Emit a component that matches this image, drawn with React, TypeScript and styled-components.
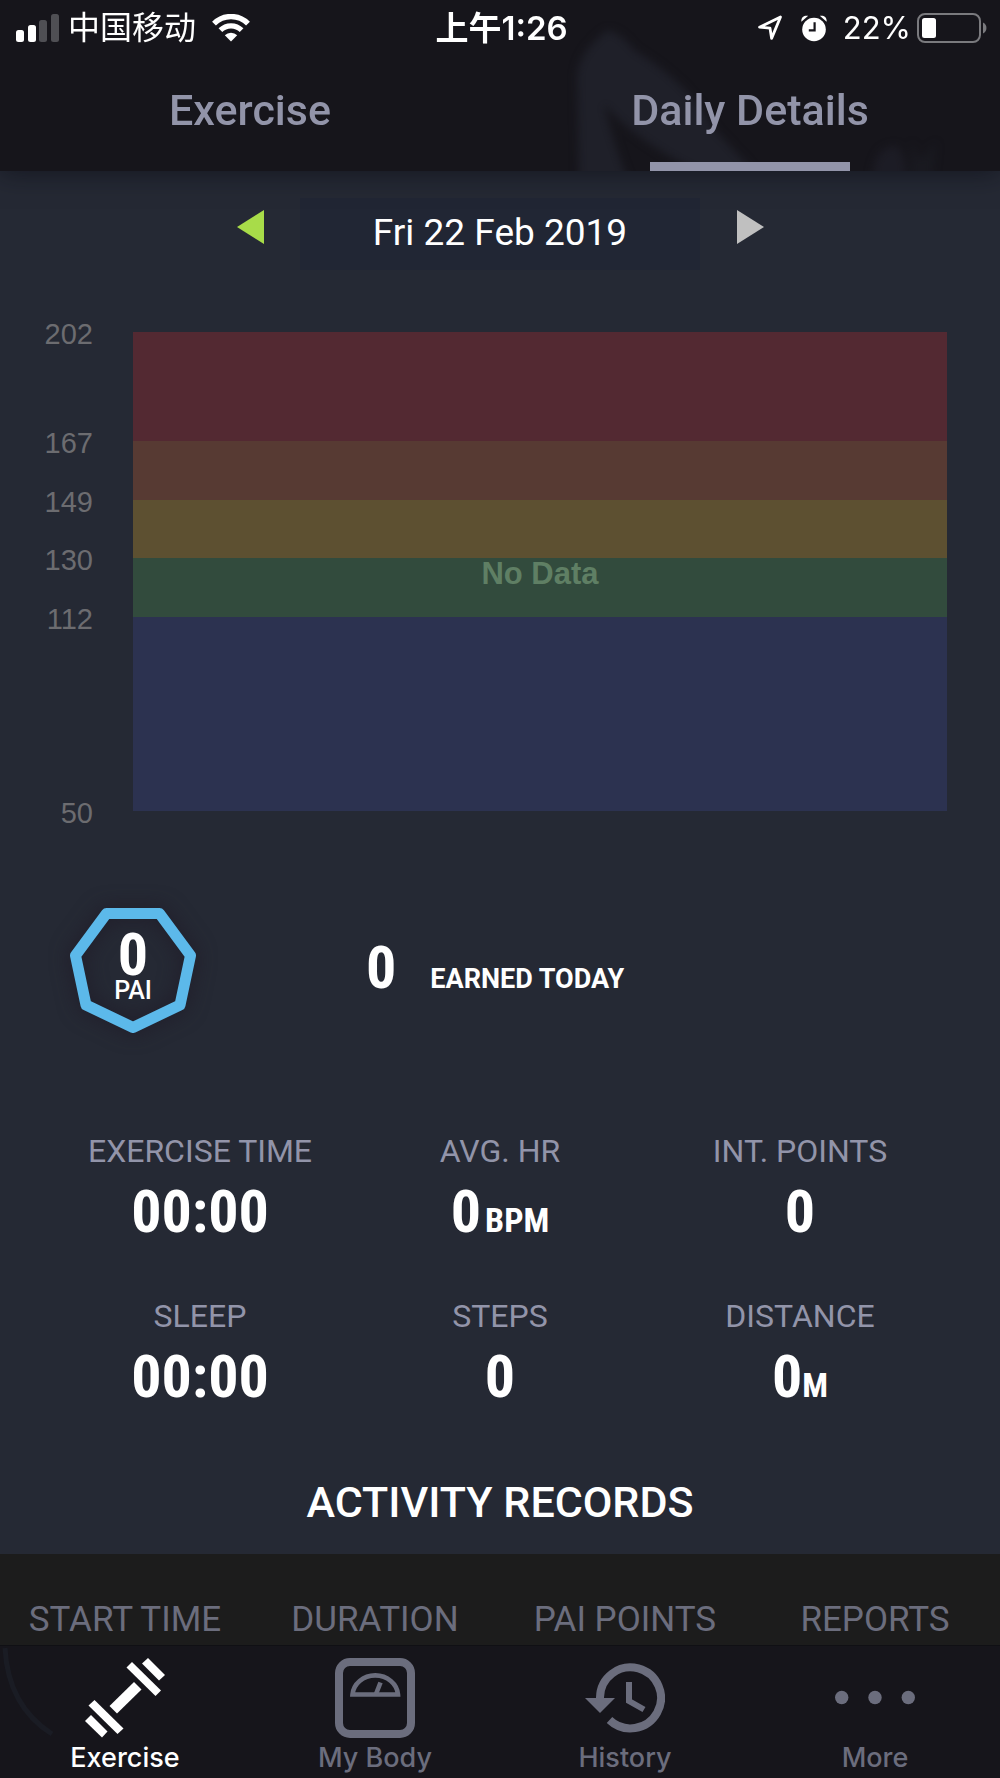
import React from "react";
import styled, { createGlobalStyle } from "styled-components";

const color = {
  chrome: "#16151b",
  page: "#252934",
  field: "#212634",
  muted: "#9294a9",
  dim: "#6b6d7d",
  white: "#ffffff",
  axis: "#6c6c70",
  lime: "#a8dc49",
  silver: "#c0c0c0",
  sky: "#5cb9ea",
  records: "#1c1c1c",
};

const numeral = `"Roboto Condensed", "Liberation Sans Narrow", sans-serif`;
const system = `Inter, "Noto Sans CJK SC", sans-serif`;

const GlobalStyle = createGlobalStyle`
  *, *::before, *::after { box-sizing: border-box; }
  body {
    margin: 0;
    background: ${color.page};
    color: ${color.white};
    font-family: Roboto, sans-serif;
  }
  button { font: inherit; border: 0; padding: 0; background: none; cursor: pointer; }
  a { text-decoration: none; }
  svg { display: block; }
`;

const Screen = styled.div`
  display: flex;
  flex-direction: column;
  min-height: 100vh;
`;

const Header = styled.header`
  position: relative;
  z-index: 1;
  background: ${color.chrome};
  box-shadow: 0 2px 24px rgba(10, 12, 20, 0.6);
`;

const Backdrop = styled.svg`
  position: absolute;
  top: 0;
  right: 0;
  width: 50%;
  height: 100%;
  pointer-events: none;
`;

const StatusBar = styled.div`
  position: relative;
  display: grid;
  grid-template-columns: 1fr auto 1fr;
  align-items: center;
  height: 56px;
  padding: 0 13px 0 16px;
  font-family: ${system};
  font-size: 32px;
  line-height: 40px;
`;

const StatusGroup = styled.div<{ $end?: boolean }>`
  display: flex;
  align-items: center;
  justify-content: ${(p) => (p.$end ? "flex-end" : "flex-start")};
`;

const Carrier = styled.span`
  margin: 0 16px 0 9px;
`;

const Clock = styled.time`
  font-size: 33px;
  font-weight: 600;
`;

const AlarmSlot = styled.span`
  margin: 0 16px 0 18px;
`;

const Charge = styled.span`
  margin-right: 6px;
  font-size: 31px;
`;

const Tabs = styled.nav`
  position: relative;
  display: grid;
  grid-template-columns: 1fr 1fr;
`;

const Tab = styled.button<{ $active?: boolean }>`
  display: flex;
  flex-direction: column;
  align-items: center;
  justify-content: space-between;
  height: 115px;
  padding-top: 30px;
  color: ${color.muted};
  font-size: 43px;
  font-weight: 500;
  line-height: 48px;

  &::after {
    content: "";
    width: 40%;
    height: 9px;
    background: ${(p) => (p.$active ? color.muted : "transparent")};
  }
`;

const Main = styled.main`
  display: flex;
  flex: 1;
  flex-direction: column;
  padding-top: 27px;
`;

const DatePicker = styled.section`
  display: grid;
  grid-template-columns: 1fr 4fr 1fr;
  align-items: start;
  width: 60%;
  margin: 0 auto 62px;
`;

const StepButton = styled.button`
  display: flex;
  align-items: center;
  justify-content: center;
  height: 58px;
`;

const DateField = styled.button`
  height: 72px;
  padding-bottom: 2px;
  background: ${color.field};
  color: ${color.white};
  font-size: 37px;
  line-height: 64px;
`;

const Chart = styled.section`
  position: relative;
  margin-bottom: 97px;
  padding-right: 53px;
`;

const ZoneRow = styled.div<{ $height: number }>`
  display: grid;
  grid-template-columns: 93px 1fr;
  column-gap: 40px;
  height: ${(p) => p.$height}px;
`;

const ZoneLabel = styled.span`
  margin-top: -15px;
  color: ${color.axis};
  font-family: "Liberation Sans", sans-serif;
  font-size: 29px;
  line-height: 34px;
  text-align: right;
`;

const ZoneBand = styled.div<{ $fill: string }>`
  background: ${(p) => p.$fill};
`;

const NoData = styled.p`
  position: absolute;
  inset: 0 53px 0 133px;
  display: flex;
  align-items: center;
  justify-content: center;
  margin: 0;
  padding-top: 4px;
  color: #5f7f64;
  font-family: "Liberation Sans", sans-serif;
  font-size: 31px;
  font-weight: 700;
`;

const PaiRow = styled.section`
  display: flex;
  align-items: center;
  margin-bottom: 97px;
  padding-left: 70px;
`;

const PaiBadge = styled.div`
  display: grid;
  place-items: center;
  width: 126px;
  height: 126px;
  margin-right: 170px;

  > * { grid-area: 1 / 1; }
`;

const Heptagon = styled.svg`
  overflow: visible;
  filter: drop-shadow(0 0 10px rgba(30, 24, 38, 0.9));
`;

const PaiText = styled.div`
  display: flex;
  flex-direction: column;
  align-items: center;
  padding-bottom: 4px;
  z-index: 1;
`;

const PaiScore = styled.span`
  font-family: ${numeral};
  font-size: 60px;
  font-weight: 700;
  line-height: 44px;
`;

const PaiName = styled.span`
  font-size: 25px;
  font-weight: 500;
  line-height: 28px;
`;

const Earned = styled.p`
  display: flex;
  align-items: baseline;
  gap: 34px;
  margin: 4px 0 0;
  font-size: 27px;
  font-weight: 700;
  line-height: 64px;
`;

const Stats = styled.dl`
  display: grid;
  grid-template-columns: repeat(3, 1fr);
  row-gap: 52px;
  margin: 0 0 67px;
  padding: 0 50px;
  text-align: center;
`;

const StatLabel = styled.dt`
  color: ${color.muted};
  font-size: 32px;
  line-height: 40px;
`;

const StatValue = styled.dd`
  display: flex;
  align-items: baseline;
  justify-content: center;
  margin: 9px 0 0;
`;

const Figure = styled.span`
  font-family: ${numeral};
  font-size: 60px;
  font-weight: 700;
  line-height: 64px;
`;

const Unit = styled.span<{ $spaced?: boolean }>`
  margin-left: ${(p) => (p.$spaced ? 4 : 0)}px;
  font-family: ${numeral};
  font-size: 34px;
  font-weight: 700;
  line-height: 40px;
`;

const RecordsTitle = styled.h2`
  margin: 0 0 26px;
  font-size: 43px;
  font-weight: 500;
  line-height: 52px;
  text-align: center;
`;

const Records = styled.section`
  flex: 1;
  padding: 46px 0 5px;
  background: ${color.records};
`;

const RecordsTable = styled.table`
  width: 100%;
  border-collapse: collapse;
  table-layout: fixed;
`;

const ColumnHead = styled.th`
  padding: 0;
  color: ${color.dim};
  font-size: 35px;
  font-weight: 400;
  line-height: 40px;
  text-align: center;
`;

const TabBar = styled.nav`
  position: sticky;
  bottom: 0;
  display: grid;
  grid-template-columns: repeat(4, 1fr);
  border-top: 1px solid #101014;
  background: ${color.chrome};
`;

const TabBarGlow = styled.svg`
  position: absolute;
  top: 0;
  left: 0;
  pointer-events: none;
`;

const TabLink = styled.a<{ $active?: boolean }>`
  display: flex;
  flex-direction: column;
  align-items: center;
  gap: 3px;
  padding: 12px 0 3px;
  color: ${(p) => (p.$active ? color.white : color.dim)};
  font-family: ${system};
  font-size: 27px;
  font-weight: 500;
  line-height: 34px;
`;

const SignalIcon = () => (
  <svg width="43" height="28" viewBox="0 0 43 28" aria-hidden="true">
    <rect x="0" y="16" width="8" height="12" rx="2.5" fill="#fff" />
    <rect x="12" y="11" width="8" height="17" rx="2.5" fill="#fff" />
    <rect x="23" y="6" width="8" height="22" rx="2.5" fill="#4f4f54" />
    <rect x="35" y="0" width="8" height="28" rx="2.5" fill="#4f4f54" />
  </svg>
);

const WifiIcon = () => (
  <svg width="38" height="28" viewBox="0 0 38 28" fill="none" aria-hidden="true">
    <path d="M2 9.6 A24 24 0 0 1 36 9.6" stroke="#fff" strokeWidth="5.4" />
    <path d="M8.4 16.2 A15 15 0 0 1 29.6 16.2" stroke="#fff" strokeWidth="5.2" />
    <path d="M19 27.5 L12.8 21.2 A8.8 8.8 0 0 1 25.2 21.2 Z" fill="#fff" />
  </svg>
);

const LocationIcon = () => (
  <svg width="26" height="26" viewBox="0 0 26 26" fill="none" aria-hidden="true">
    <path d="M23.5 2 L2.5 12.2 L13 13.2 L14.6 23.4 Z" stroke="#fff" strokeWidth="2.8" strokeLinejoin="round" />
  </svg>
);

const AlarmIcon = () => (
  <svg width="26" height="27" viewBox="0 0 26 27" aria-hidden="true">
    <circle cx="13" cy="14.5" r="11.8" fill="#fff" />
    <path d="M0.4 6.8 C-0.2 2.4 3 0 7.2 0.8 Z M25.6 6.8 C26.2 2.4 23 0 18.8 0.8 Z" fill="#fff" />
    <path d="M13.6 7.2 V15.4 H7.8" stroke={color.chrome} strokeWidth="2.2" fill="none" />
  </svg>
);

const BatteryIcon = () => (
  <svg width="70" height="30" viewBox="0 0 70 30" aria-hidden="true">
    <rect x="1" y="1" width="62" height="28" rx="7" fill="none" stroke="#7a7a7e" strokeWidth="2" />
    <rect x="5" y="5" width="14" height="20" rx="2.5" fill="#fff" />
    <path d="M66 9.5 C70.6 11.5 70.6 18.5 66 20.5 Z" fill="#7a7a7e" />
  </svg>
);

const ArrowIcon = ({ back }: { back?: boolean }) => (
  <svg width="27" height="34" viewBox="0 0 27 34" aria-hidden="true">
    <path d={back ? "M27 0 V34 L0 17 Z" : "M0 0 V34 L27 17 Z"} fill={back ? color.lime : color.silver} />
  </svg>
);

const DumbbellIcon = () => (
  <svg width="80" height="80" viewBox="0 0 80 80" fill="currentColor" aria-hidden="true">
    <path d="M63 0 L80 17 L74 22.5 L57 5.5 Z" />
    <path d="M47 4 L76 32.5 L70.5 38 L41.5 9.5 Z" />
    <path d="M49 24 L56.5 31.5 L32 55.5 L24.5 48 Z" />
    <path d="M9.5 42 L38.5 70.5 L32.5 76 L3.5 47.5 Z" />
    <path d="M6 57 L22.5 73.5 L17 79.5 L0 63 Z" />
  </svg>
);

const ScaleIcon = () => (
  <svg width="80" height="80" viewBox="0 0 80 80" fill="none" stroke="currentColor" aria-hidden="true">
    <rect x="4" y="4" width="72" height="72" rx="11" strokeWidth="8" />
    <path d="M17.5 36.5 A22.8 20.5 0 0 1 63 36.5 Z" strokeWidth="4.6" />
    <path d="M41 36 L45.5 24.5" strokeWidth="4.6" />
  </svg>
);

const HistoryIcon = () => (
  <svg width="80" height="80" viewBox="0 0 80 80" fill="none" stroke="currentColor" aria-hidden="true">
    <path d="M15 41 V39.5 A30.5 30.5 0 1 1 24.5 62" strokeWidth="8" />
    <path d="M0 40 H30 L15 55 Z" fill="currentColor" stroke="none" />
    <path d="M44 24 V43 L59 51.5" strokeWidth="6" />
  </svg>
);

const MoreIcon = () => (
  <svg width="80" height="80" viewBox="0 0 80 80" fill="currentColor" aria-hidden="true">
    <circle cx="6.7" cy="39.5" r="6.7" />
    <circle cx="40" cy="39.5" r="6.7" />
    <circle cx="73.3" cy="39.5" r="6.7" />
  </svg>
);

const zones = [
  { value: 202, height: 109, fill: "#532932" },
  { value: 167, height: 59, fill: "#573a33" },
  { value: 149, height: 58, fill: "#5d5031" },
  { value: 130, height: 59, fill: "#324b3d" },
  { value: 112, height: 194, fill: "#2c3250" },
  { value: 50, height: 0, fill: "transparent" },
];

const stats = [
  { label: "EXERCISE TIME", value: "00:00" },
  { label: "AVG. HR", value: "0", unit: "BPM", spaced: true },
  { label: "INT. POINTS", value: "0" },
  { label: "SLEEP", value: "00:00" },
  { label: "STEPS", value: "0" },
  { label: "DISTANCE", value: "0", unit: "M" },
];

const columns = ["START TIME", "DURATION", "PAI POINTS", "REPORTS"];

const destinations = [
  { label: "Exercise", Icon: DumbbellIcon, active: true },
  { label: "My Body", Icon: ScaleIcon },
  { label: "History", Icon: HistoryIcon },
  { label: "More", Icon: MoreIcon },
];

export default function App() {
  return (
    <Screen>
      <GlobalStyle />
      <Header>
        <Backdrop viewBox="0 0 500 171" preserveAspectRatio="none" aria-hidden="true">
          <defs>
            <filter id="soft" x="-20%" y="-20%" width="140%" height="140%" colorInterpolationFilters="sRGB">
              <feGaussianBlur stdDeviation="4" />
            </filter>
          </defs>
          <g filter="url(#soft)" fill="#1f2029">
            <path d="M79 180 L77 75 Q80 50 108 30 Q122 34 134 50 Q190 84 215 130 L262 180 L195 170 Q135 140 104 104 Q112 140 128 180 Z" />
            <path d="M372 180 Q374 146 396 146 Q406 152 406 180 Z" opacity="0.7" />
            <path d="M410 180 L412 142 L420 160 L436 142 L432 180 Z" opacity="0.4" />
          </g>
        </Backdrop>
        <StatusBar>
          <StatusGroup>
            <SignalIcon />
            <Carrier>中国移动</Carrier>
            <WifiIcon />
          </StatusGroup>
          <Clock>上午1:26</Clock>
          <StatusGroup $end>
            <LocationIcon />
            <AlarmSlot>
              <AlarmIcon />
            </AlarmSlot>
            <Charge>22%</Charge>
            <BatteryIcon />
          </StatusGroup>
        </StatusBar>
        <Tabs>
          <Tab type="button">Exercise</Tab>
          <Tab type="button" $active aria-current="page">
            Daily Details
          </Tab>
        </Tabs>
      </Header>

      <Main>
        <DatePicker>
          <StepButton type="button" aria-label="Previous day">
            <ArrowIcon back />
          </StepButton>
          <DateField type="button">Fri 22 Feb 2019</DateField>
          <StepButton type="button" aria-label="Next day">
            <ArrowIcon />
          </StepButton>
        </DatePicker>

        <Chart>
          {zones.map((zone) => (
            <ZoneRow key={zone.value} $height={zone.height}>
              <ZoneLabel>{zone.value}</ZoneLabel>
              <ZoneBand $fill={zone.fill} />
            </ZoneRow>
          ))}
          <NoData>No Data</NoData>
        </Chart>

        <PaiRow>
          <PaiBadge>
            <Heptagon width="126" height="126" viewBox="0 0 126 126" aria-hidden="true">
              <path
                d="M36.5 5.5 H89.5 L120.5 47.5 L110 97 L63 119.5 L16 97 L5.500 47.5 Z"
                fill="none"
                stroke={color.sky}
                strokeWidth="11"
                strokeLinejoin="round"
              />
            </Heptagon>
            <PaiText>
              <PaiScore>0</PaiScore>
              <PaiName>PAI</PaiName>
            </PaiText>
          </PaiBadge>
          <Earned>
            <Figure>0</Figure>
            EARNED TODAY
          </Earned>
        </PaiRow>

        <Stats>
          {stats.map((stat) => (
            <div key={stat.label}>
              <StatLabel>{stat.label}</StatLabel>
              <StatValue>
                <Figure>{stat.value}</Figure>
                {stat.unit && <Unit $spaced={stat.spaced}>{stat.unit}</Unit>}
              </StatValue>
            </div>
          ))}
        </Stats>

        <RecordsTitle>ACTIVITY RECORDS</RecordsTitle>
        <Records>
          <RecordsTable>
            <thead>
              <tr>
                {columns.map((column) => (
                  <ColumnHead key={column} scope="col">
                    {column}
                  </ColumnHead>
                ))}
              </tr>
            </thead>
          </RecordsTable>
        </Records>
      </Main>

      <TabBar>
        <TabBarGlow width="70" height="110" viewBox="0 0 70 110" fill="none" aria-hidden="true">
          <path d="M5 2 Q8 60 52 88" stroke="#1a1c24" strokeWidth="5" />
        </TabBarGlow>
        {destinations.map(({ label, Icon, active }) => (
          <TabLink key={label} href="#" $active={active}>
            <Icon />
            {label}
          </TabLink>
        ))}
      </TabBar>
    </Screen>
  );
}
